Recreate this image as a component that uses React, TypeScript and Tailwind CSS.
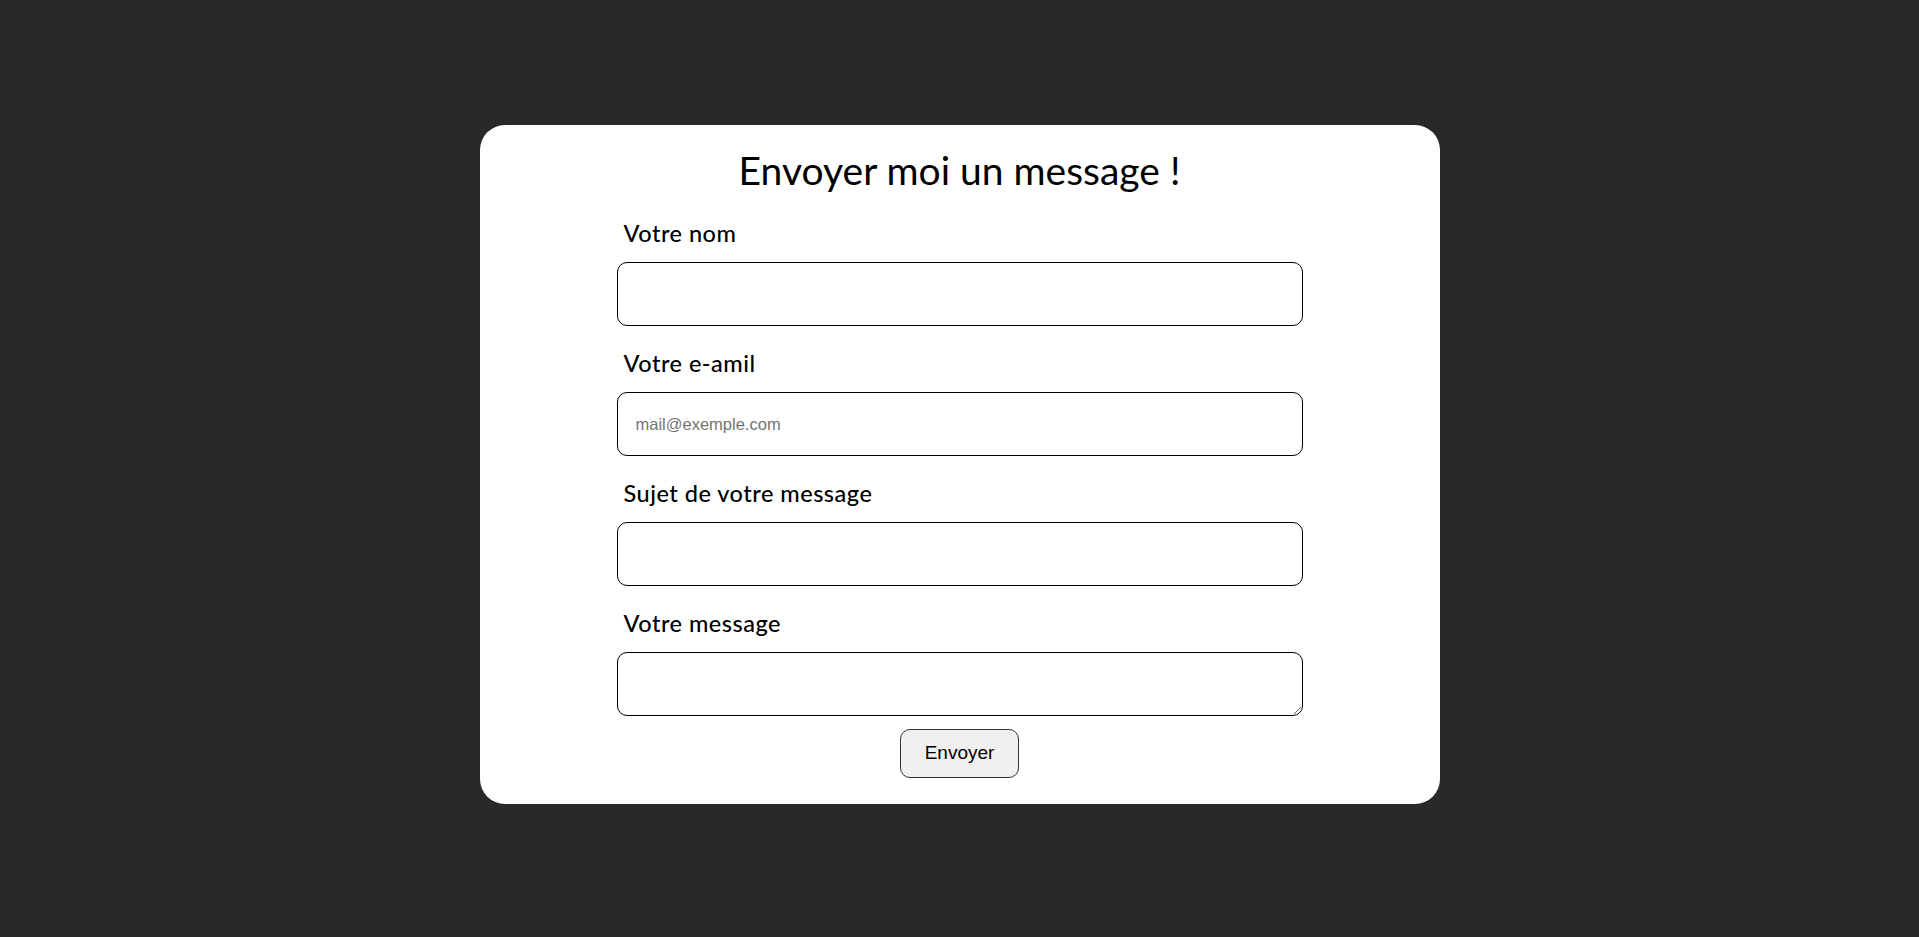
import React from "react";

const fields = [
  { label: "Votre nom", type: "text", placeholder: "" },
  { label: "Votre e-amil", type: "email", placeholder: "mail@exemple.com" },
  { label: "Sujet de votre message", type: "text", placeholder: "" },
];

export default function App() {
  return (
    <div className="min-h-screen bg-[#292929] pt-[125px]">
      {/* Contact card */}
      <div className="mx-auto w-[960px] rounded-[25px] bg-white pt-[21px] pb-[26px]">
        <h1 className="text-center font-['Lato',sans-serif] text-[39px] leading-[48px] font-normal text-black">
          Envoyer moi un message !
        </h1>
        <form className="mx-auto mt-[25px] flex w-[686px] flex-col">
          {fields.map((f, i) => (
            <div key={i} className="mb-[23px] flex flex-col">
              <label className="mb-[14px] pl-[7px] font-['Lato',sans-serif] text-[23.5px] leading-[29px] font-medium tracking-[0.5px] text-black">
                {f.label}
              </label>
              <input
                type={f.type}
                placeholder={f.placeholder}
                className="h-[64px] rounded-[10px] border border-black px-[18px] font-['Liberation_Sans',Arial,sans-serif] text-[16.5px] text-black outline-none placeholder:text-[#757575]"
              />
            </div>
          ))}
          <div className="flex flex-col">
            <label className="mb-[14px] pl-[7px] font-['Lato',sans-serif] text-[23.5px] leading-[29px] font-medium tracking-[0.5px] text-black">
              Votre message
            </label>
            <textarea className="h-[64px] rounded-[10px] border border-black px-[18px] py-2 font-['Liberation_Sans',Arial,sans-serif] text-[16px] outline-none" />
          </div>
          <button
            type="button"
            className="mx-auto mt-[13px] h-[49px] w-[119px] rounded-[10px] border border-[#333] bg-[#f0f0f0] font-['Liberation_Sans',Arial,sans-serif] text-[19px] text-black"
          >
            Envoyer
          </button>
        </form>
      </div>
    </div>
  );
}
